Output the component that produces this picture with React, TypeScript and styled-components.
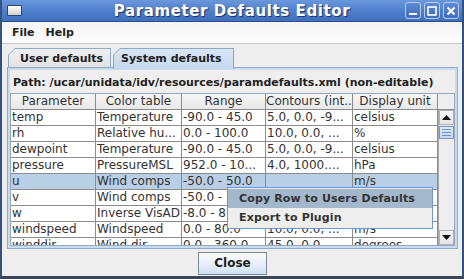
import styled, { createGlobalStyle } from 'styled-components'

const UI = `"DejaVu Sans", "Liberation Sans", sans-serif`

const GlobalStyle = createGlobalStyle`
  html, body {
    margin: 0;
    padding: 0;
    background: #3a5480;
  }
  body {
    font-family: ${UI};
  }
`

interface Row {
  param: string
  table: string
  range: string
  contours: string
  unit: string
}

const rows: Row[] = [
  { param: 'temp', table: 'Temperature', range: '-90.0 - 45.0', contours: '5.0, 0.0, -9...', unit: 'celsius' },
  { param: 'rh', table: 'Relative hu...', range: '0.0 - 100.0', contours: '10.0, 0.0, ...', unit: '%' },
  { param: 'dewpoint', table: 'Temperature', range: '-90.0 - 45.0', contours: '5.0, 0.0, -9...', unit: 'celsius' },
  { param: 'pressure', table: 'PressureMSL', range: '952.0 - 10...', contours: '4.0, 1000....', unit: 'hPa' },
  { param: 'u', table: 'Wind comps', range: '-50.0 - 50.0', contours: '', unit: 'm/s' },
  { param: 'v', table: 'Wind comps', range: '-50.0 - 50.0', contours: '', unit: 'm/s' },
  { param: 'w', table: 'Inverse VisAD', range: '-8.0 - 8.0', contours: '', unit: 'm/s' },
  { param: 'windspeed', table: 'Windspeed', range: '0.0 - 80.0', contours: '10.0, 0.0, ...', unit: 'm/s' },
  { param: 'winddir', table: 'Wind dir', range: '0.0 - 360.0', contours: '45.0, 0.0, ...', unit: 'degrees' },
]

const columns = ['Parameter', 'Color table', 'Range', 'Contours (int...', 'Display unit']
const SELECTED = 4

export default function App() {
  return (
    <>
      <GlobalStyle />
      <Window>
        <TitleBar>
          <WinIcon />
          <Title>Parameter Defaults Editor</Title>
          <Controls>
            <CtrlButton>
              <svg width="10" height="10" viewBox="0 0 10 10">
                <rect x="1" y="7" width="8" height="2" fill="#fff" />
              </svg>
            </CtrlButton>
            <CtrlButton>
              <svg width="10" height="10" viewBox="0 0 10 10">
                <rect x="1" y="1" width="8" height="8" fill="none" stroke="#fff" strokeWidth="1.6" />
              </svg>
            </CtrlButton>
            <CtrlButton>
              <svg width="10" height="10" viewBox="0 0 10 10">
                <path d="M1.5 1.5 L8.5 8.5 M8.5 1.5 L1.5 8.5" stroke="#fff" strokeWidth="2" />
              </svg>
            </CtrlButton>
          </Controls>
        </TitleBar>

        <MenuBar>
          <MenuItem>File</MenuItem>
          <MenuItem>Help</MenuItem>
        </MenuBar>

        <Content>
          <Tabs>
            <Tab>
              <TabLabel>User defaults</TabLabel>
            </Tab>
            <Tab selected>
              <TabLabel>System defaults</TabLabel>
            </Tab>
          </Tabs>
          <Panel>
            <PathLabel>Path: /ucar/unidata/idv/resources/paramdefaults.xml (non-editable)</PathLabel>
            <ScrollPane>
              <Grid>
                {columns.map((c) => (
                  <HeadCell key={c}>{c}</HeadCell>
                ))}
                {rows.map((r, i) =>
                  [r.param, r.table, r.range, r.contours, r.unit].map((v, j) => (
                    <Cell key={i + '-' + j} selected={i === SELECTED}>
                      {v}
                    </Cell>
                  ))
                )}
              </Grid>
              <ScrollCol>
                <Corner />
                <ScrollBar>
                  <ArrowButton>
                    <svg width="9" height="5" viewBox="0 0 9 5">
                      <path d="M0 5 L4.5 0 L9 5 Z" fill="#111" />
                    </svg>
                  </ArrowButton>
                  <Thumb>
                    <Grip />
                    <Grip />
                    <Grip />
                  </Thumb>
                  <Track />
                  <ArrowButton>
                    <svg width="9" height="5" viewBox="0 0 9 5">
                      <path d="M0 0 L4.5 5 L9 0 Z" fill="#111" />
                    </svg>
                  </ArrowButton>
                </ScrollBar>
              </ScrollCol>
            </ScrollPane>
          </Panel>
          <ButtonRow>
            <Button>Close</Button>
          </ButtonRow>
        </Content>

        <PopupMenu>
          <PopupItem active>Copy Row to Users Defaults</PopupItem>
          <PopupItem>Export to Plugin</PopupItem>
        </PopupMenu>
      </Window>
    </>
  )
}

const Window = styled.div`
  position: relative;
  width: 464px;
  height: 279px;
  box-sizing: border-box;
  display: flex;
  flex-direction: column;
  background: #eeeeee;
  border-left: 2px solid #34527f;
  border-right: 2px solid #34527f;
  border-bottom: 3px solid #3a4558;
  overflow: hidden;
`

const TitleBar = styled.div`
  height: 22px;
  margin: 0 -2px;
  flex: none;
  display: flex;
  align-items: center;
  position: relative;
  background: linear-gradient(#6a98dc, #4f80cc 50%, #3f6fbf);
  border-bottom: 1px solid #2c4f86;
  box-sizing: border-box;
`

const WinIcon = styled.div`
  width: 13px;
  height: 9px;
  margin-left: 7px;
  border: 1px solid #33466a;
  border-radius: 1px;
  background: linear-gradient(#ffffff, #cfcfcf);
`

const Title = styled.div`
  position: absolute;
  left: 0;
  right: 0;
  text-align: center;
  font-family: ${UI};
  font-size: 15px;
  font-weight: bold;
  color: #ffffff;
  text-shadow: 1px 1px 1px #1d3560;
  letter-spacing: 0.6px;
  pointer-events: none;
`

const Controls = styled.div`
  margin-left: auto;
  margin-right: 5px;
  display: flex;
  gap: 3px;
  position: relative;
`

const CtrlButton = styled.div`
  width: 16px;
  height: 17px;
  box-sizing: border-box;
  border: 1px solid #b9cdee;
  border-radius: 3px;
  background: linear-gradient(#5d8ad3, #3f6dba);
  display: flex;
  align-items: center;
  justify-content: center;
`

const MenuBar = styled.div`
  height: 21px;
  flex: none;
  display: flex;
  align-items: center;
  gap: 11px;
  padding-left: 10px;
  background: linear-gradient(#f4f4f4, #fbfbfb);
  border-bottom: 1px solid #c6c6c6;
`

const MenuItem = styled.span`
  font-family: ${UI};
  font-size: 11px;
  font-weight: bold;
  color: #222;
`

const Content = styled.div`
  flex: 1;
  display: flex;
  flex-direction: column;
  padding: 4px 4px 0 5px;
`

const Tabs = styled.div`
  display: flex;
  gap: 2px;
  height: 20px;
  padding-left: 1px;
  position: relative;
  z-index: 1;
`

const Tab = styled.div<{ selected?: boolean }>`
  position: relative;
  height: ${(p) => (p.selected ? '21px' : '20px')};
  width: ${(p) => (p.selected ? '121px' : '103px')};
  box-sizing: border-box;
  padding-left: ${(p) => (p.selected ? '8px' : '12px')};
  display: flex;
  align-items: center;
  background: #8ea8c8;
  clip-path: polygon(7px 0, 100% 0, 100% 100%, 0 100%, 0 7px);

  &::before {
    content: '';
    position: absolute;
    inset: 1px 1px ${(p) => (p.selected ? '0' : '1px')} 1px;
    background: ${(p) => (p.selected ? 'linear-gradient(#d8e7f6, #c4d8ee)' : 'linear-gradient(#efefef, #e2e2e2)')};
    clip-path: polygon(6px 0, 100% 0, 100% 100%, 0 100%, 0 6px);
  }
`

const TabLabel = styled.span`
  position: relative;
  font-family: ${UI};
  font-size: 11px;
  font-weight: bold;
  color: #222;
  white-space: nowrap;
`

const Panel = styled.div`
  display: flex;
  flex-direction: column;
  border: 1px solid #8eaad3;
  box-shadow: inset 0 0 0 2px #c8dcf0;
  background: #eeeeee;
  padding: 0 2px 2px 2px;
  margin-top: -1px;
`

const PathLabel = styled.div`
  height: 25px;
  padding-left: 3px;
  padding-top: 3px;
  box-sizing: border-box;
  display: flex;
  align-items: center;
  font-family: ${UI};
  font-size: 11px;
  font-weight: bold;
  color: #222;
  white-space: nowrap;
`

const ScrollPane = styled.div`
  display: flex;
  height: 151px;
  border: 1px solid #98a8bc;
  overflow: hidden;
  background: #eeeeee;
`

const Grid = styled.div`
  display: grid;
  grid-template-columns: 85px 86px 84px 87px 85px;
  grid-auto-rows: 16px;
  align-content: start;
  background: #ffffff;
`

const HeadCell = styled.div`
  box-sizing: border-box;
  border-right: 1px solid #8c8c8c;
  border-bottom: 1px solid #8c8c8c;
  background: linear-gradient(#f6f6f6, #e8e8e8);
  font-family: ${UI};
  font-size: 12px;
  color: #333;
  text-align: center;
  line-height: 15px;
  white-space: nowrap;
  overflow: hidden;
`

const Cell = styled.div<{ selected?: boolean }>`
  box-sizing: border-box;
  border-right: 1px solid #8c8c8c;
  border-bottom: 1px solid #8c8c8c;
  background: ${(p) => (p.selected ? '#b8cfe5' : '#ffffff')};
  font-family: ${UI};
  font-size: 12px;
  color: #333;
  padding-left: 1px;
  line-height: 15px;
  white-space: nowrap;
  overflow: hidden;
`

const ScrollCol = styled.div`
  width: 16px;
  display: flex;
  flex-direction: column;
`

const Corner = styled.div`
  height: 16px;
  flex: none;
  box-sizing: border-box;
  border-bottom: 1px solid #8c8c8c;
  background: #eeeeee;
`

const ScrollBar = styled.div`
  flex: 1;
  display: flex;
  flex-direction: column;
  border-left: 1px solid #a8a8a8;
  background: #eeeeee;
`

const ArrowButton = styled.div`
  height: 15px;
  flex: none;
  box-sizing: border-box;
  display: flex;
  align-items: center;
  justify-content: center;
  background: linear-gradient(#f4f4f4, #e4e4e4);
  border: 1px solid #b0b0b0;
`

const Thumb = styled.div`
  height: 13px;
  flex: none;
  margin-top: 1px;
  box-sizing: border-box;
  border: 1px solid #7396cc;
  background: linear-gradient(#dde9f6, #c3d7ee);
  display: flex;
  flex-direction: column;
  justify-content: center;
  gap: 2px;
  padding: 0 2px;
`

const Grip = styled.div`
  height: 1px;
  background: #6f92c8;
`

const Track = styled.div`
  flex: 1;
`

const ButtonRow = styled.div`
  flex: 1;
  display: flex;
  justify-content: center;
  align-items: center;
  padding-top: 1px;
`

const Button = styled.div`
  width: 69px;
  height: 23px;
  box-sizing: border-box;
  border: 1px solid #7a8a9c;
  background: linear-gradient(#fbfbfb, #e6eef8 55%, #cfe0f2);
  display: flex;
  align-items: center;
  justify-content: center;
  font-family: ${UI};
  font-size: 12px;
  font-weight: bold;
  color: #222;
`

const PopupMenu = styled.div`
  position: absolute;
  left: 225px;
  top: 187px;
  width: 206px;
  box-sizing: border-box;
  border: 1px solid #7196d4;
  background: #eeeeee;
  padding: 1px 0;
  z-index: 5;
`

const PopupItem = styled.div<{ active?: boolean }>`
  height: 19px;
  padding-left: 11px;
  display: flex;
  align-items: center;
  font-family: ${UI};
  font-size: 11px;
  font-weight: bold;
  letter-spacing: 0.15px;
  color: #333;
  background: ${(p) => (p.active ? '#a3b8cc' : 'transparent')};
  white-space: nowrap;
`
